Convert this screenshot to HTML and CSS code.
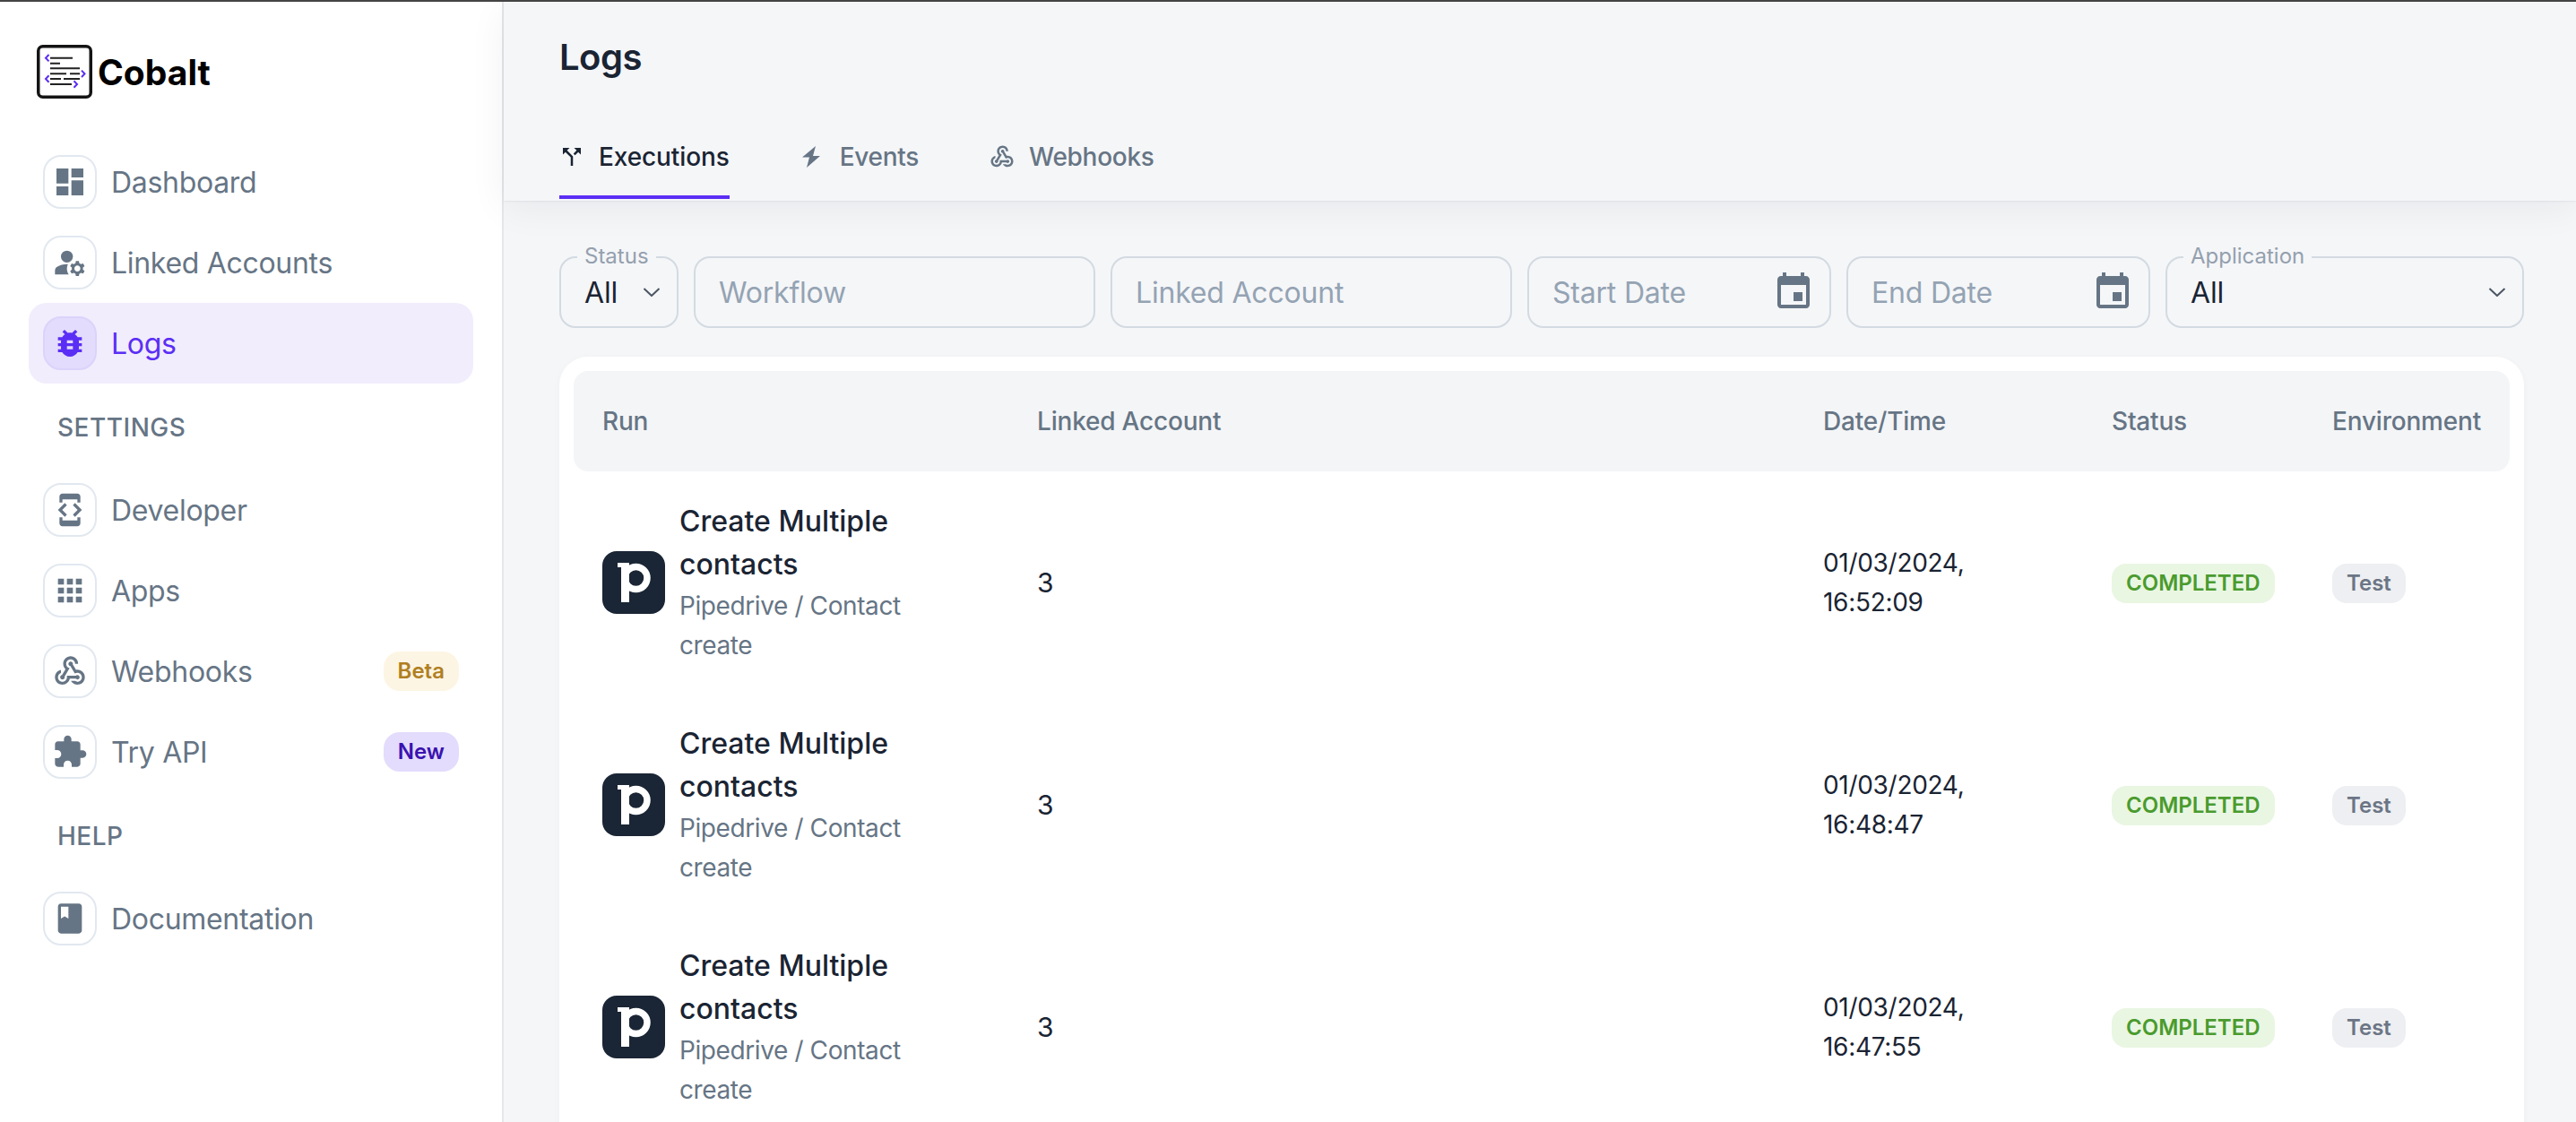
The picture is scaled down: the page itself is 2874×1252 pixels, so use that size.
FILE: index.html
```html
<!DOCTYPE html>
<html>
<head>
	<title>Cobalt - Logs</title>
	<link rel="stylesheet" href="styles.css">
</head>
<body>
	<div class="app">
		<!-- sidebar -->
		<aside class="sidebar">
			<div class="brand">
				<svg class="brand-logo" viewBox="0 0 62 60">
					<rect x="1.75" y="1.75" width="58.5" height="56.5" rx="5" fill="#fff" stroke="#141414" stroke-width="3.5"/>
					<g stroke="#222" stroke-width="2" fill="none">
						<path d="M15 14.7h25M15 20.7h11M15 26.3h33M15 32.3h18M37 32.3h11M15 38h12M30 38h18M15 44h24"/>
					</g>
					<g stroke="#5b2ef5" stroke-width="2" fill="none">
						<path d="M13.5 11l-3.5 3.7 3.5 3.7M13.5 34.3l-3.5 3.7 3.5 3.7M50 28.6l3.5 3.7-3.5 3.7M41.500 40.300l3.500 3.700-3.500 3.700"/>
					</g>
				</svg>
				<span class="brand-name">Cobalt</span>
			</div>

			<a class="nav-item">
				<span class="nav-icon"><svg viewBox="0 0 24 24"><path d="M3 13h8V3H3v10zm0 8h8v-6H3v6zm10 0h8V11h-8v10zm0-18v6h8V3h-8z"/></svg></span>
				Dashboard
			</a>
			<a class="nav-item">
				<span class="nav-icon"><svg viewBox="0 0 24 24"><circle cx="10" cy="8" r="4"/><path d="M10.670 13.020c-.22-.01-.44-.02-.67-.02-2.420 0-4.680.67-6.610 1.820-.88.52-1.390 1.500-1.390 2.530V20h9.260c-.79-1.130-1.260-2.510-1.260-4 0-1.070.25-2.070.67-2.980z"/><path d="M20.750 16c0-.22-.03-.42-.06-.63l1.140-1.010-1-1.730-1.450.49c-.32-.27-.68-.48-1.080-.63L18 11h-2l-.3 1.490c-.4.15-.76.36-1.080.63l-1.450-.49-1 1.730 1.140 1.010c-.03.21-.06.41-.06.63s.03.42.06.63l-1.140 1.010 1 1.730 1.450-.49c.32.27.68.48 1.080.63L16 21h2l.3-1.490c.4-.15.76-.36 1.080-.63l1.450.49 1-1.730-1.140-1.010c.03-.21.06-.41.06-.63zM17 18c-1.100 0-2-.9-2-2s.9-2 2-2 2 .9 2 2-.9 2-2 2z"/></svg></span>
				Linked Accounts
			</a>
			<a class="nav-item active">
				<span class="nav-icon"><svg viewBox="0 0 24 24"><path d="M20 8h-2.810c-.45-.78-1.070-1.450-1.820-1.960L17 4.410 15.590 3l-2.170 2.170C12.960 5.060 12.490 5 12 5c-.49 0-.96.06-1.410.17L8.410 3 7 4.410l1.620 1.630C7.880 6.550 7.260 7.220 6.810 8H4v2h2.090c-.05.33-.09.66-.09 1v1H4v2h2v1c0 .34.04.67.09 1H4v2h2.810c1.040 1.790 2.970 3 5.190 3s4.150-1.210 5.190-3H20v-2h-2.090c.05-.33.09-.66.09-1v-1h2v-2h-2v-1c0-.34-.04-.67-.09-1H20V8zm-6 8h-4v-2h4v2zm0-4h-4v-2h4v2z"/></svg></span>
				Logs
			</a>

			<div class="nav-section">SETTINGS</div>
			<a class="nav-item">
				<span class="nav-icon"><svg viewBox="0 0 24 24"><path d="M7 5h10v2h2V3c0-1.100-.9-1.990-2-1.990L7 1c-1.100 0-2 .9-2 2v4h2V5zm8.410 11.590L20 12l-4.590-4.590L14 8.830 17.170 12 14 15.170l1.410 1.420zM10 15.170L6.830 12 10 8.830 8.590 7.410 4 12l4.590 4.590L10 15.170zM17 19H7v-2H5v4c0 1.100.9 2 2 2h10c1.100 0 2-.9 2-2v-4h-2v2z"/></svg></span>
				Developer
			</a>
			<a class="nav-item">
				<span class="nav-icon"><svg viewBox="0 0 24 24"><path d="M4 8h4V4H4v4zm6 12h4v-4h-4v4zm-6 0h4v-4H4v4zm0-6h4v-4H4v4zm6 0h4v-4h-4v4zm6-10v4h4V4h-4zm-6 4h4V4h-4v4zm6 6h4v-4h-4v4zm0 6h4v-4h-4v4z"/></svg></span>
				Apps
			</a>
			<a class="nav-item">
				<span class="nav-icon"><svg viewBox="0 0 24 24"><path d="M10 15h5.880c.27-.31.67-.5 1.120-.5.83 0 1.500.67 1.500 1.500s-.67 1.500-1.500 1.500c-.44 0-.84-.19-1.120-.5H11.900c-.46 2.280-2.480 4-4.900 4-2.760 0-5-2.240-5-5 0-2.420 1.720-4.440 4-4.900v2.070c-1.160.41-2 1.530-2 2.830 0 1.650 1.350 3 3 3s3-1.350 3-3v-1zm2.500-11c1.650 0 3 1.350 3 3h2c0-2.760-2.240-5-5-5s-5 2.240-5 5c0 1.430.6 2.710 1.550 3.620l-2.350 3.900c-.68.14-1.200.75-1.200 1.480 0 .83.67 1.500 1.500 1.500s1.500-.67 1.500-1.500c0-.16-.02-.31-.07-.45l3.380-5.630C10.490 9.610 9.500 8.420 9.500 7c0-1.650 1.350-3 3-3zm4.500 9c-.64 0-1.230.2-1.720.54l-3.050-5.070C11.530 8.350 11 7.740 11 7c0-.83.67-1.500 1.500-1.500S14 6.170 14 7c0 .15-.02.29-.06.43l2.190 3.650c.28-.05.57-.08.87-.08 2.760 0 5 2.240 5 5s-2.240 5-5 5c-1.850 0-3.470-1.010-4.330-2.500h2.670c.48.32 1.050.5 1.660.5 1.650 0 3-1.350 3-3s-1.350-3-3-3z"/></svg></span>
				Webhooks
				<span class="nav-badge beta">Beta</span>
			</a>
			<a class="nav-item">
				<span class="nav-icon"><svg viewBox="0 0 24 24"><path d="M20.500 11H19V7c0-1.100-.9-2-2-2h-4V3.500C13 2.120 11.880 1 10.500 1S8 2.120 8 3.500V5H4c-1.100 0-1.990.9-1.990 2v3.800H3.500c1.490 0 2.700 1.210 2.700 2.700s-1.210 2.700-2.700 2.700H2V20c0 1.100.9 2 2 2h3.800v-1.500c0-1.490 1.210-2.700 2.700-2.700 1.490 0 2.700 1.210 2.700 2.700V22H17c1.100 0 2-.9 2-2v-4h1.500c1.380 0 2.500-1.120 2.500-2.500S21.880 11 20.500 11z"/></svg></span>
				Try API
				<span class="nav-badge new">New</span>
			</a>

			<div class="nav-section">HELP</div>
			<a class="nav-item">
				<span class="nav-icon"><svg viewBox="0 0 24 24"><path d="M18 2H6c-1.100 0-2 .9-2 2v16c0 1.100.9 2 2 2h12c1.100 0 2-.9 2-2V4c0-1.100-.9-2-2-2zM6 4h5v8l-2.500-1.500L6 12V4z"/></svg></span>
				Documentation
			</a>
		</aside>

		<main class="main">
			<header class="page-header">
				<h1>Logs</h1>
				<nav class="tabs">
					<a class="tab active">
						<svg viewBox="0 0 24 24"><path d="M14 4l2.290 2.290-2.880 2.880 1.420 1.420 2.880-2.880L20 10V4zm-4 0H4v6l2.290-2.290 4.710 4.700V20h2v-8.410l-5.290-5.300z"/></svg>
						Executions
					</a>
					<a class="tab">
						<svg viewBox="0 0 30 30"><path d="M18 3L3 15.500h8L8 27 23 14h-8z"/></svg>
						Events
					</a>
					<a class="tab">
						<svg viewBox="0 0 24 24"><path d="M10 15h5.880c.27-.31.67-.5 1.120-.5.83 0 1.500.67 1.500 1.500s-.67 1.500-1.500 1.500c-.44 0-.84-.19-1.120-.5H11.900c-.46 2.280-2.480 4-4.900 4-2.760 0-5-2.240-5-5 0-2.420 1.720-4.440 4-4.900v2.070c-1.160.41-2 1.530-2 2.830 0 1.650 1.350 3 3 3s3-1.350 3-3v-1zm2.500-11c1.650 0 3 1.350 3 3h2c0-2.760-2.240-5-5-5s-5 2.240-5 5c0 1.430.6 2.710 1.550 3.620l-2.350 3.900c-.68.14-1.200.75-1.200 1.480 0 .83.67 1.500 1.500 1.500s1.500-.67 1.500-1.500c0-.16-.02-.31-.07-.45l3.380-5.630C10.490 9.610 9.500 8.420 9.500 7c0-1.650 1.350-3 3-3zm4.500 9c-.64 0-1.230.2-1.720.54l-3.050-5.070C11.530 8.350 11 7.740 11 7c0-.83.67-1.500 1.500-1.500S14 6.170 14 7c0 .15-.02.29-.06.43l2.190 3.650c.28-.05.57-.08.87-.08 2.760 0 5 2.240 5 5s-2.240 5-5 5c-1.850 0-3.470-1.010-4.330-2.500h2.670c.48.32 1.050.5 1.660.5 1.650 0 3-1.350 3-3s-1.350-3-3-3z"/></svg>
						Webhooks
					</a>
				</nav>
			</header>

			<div class="content">
				<div class="filters">
					<div class="field w-status">
						<span class="field-label">Status</span>
						<span class="field-value">All</span>
						<svg class="chevron" viewBox="0 0 20 10"><path d="M1.500 1l8.500 8 8.500-8"/></svg>
					</div>
					<div class="field w-text"><span class="placeholder">Workflow</span></div>
					<div class="field w-text"><span class="placeholder">Linked Account</span></div>
					<div class="field w-date">
						<span class="placeholder">Start Date</span>
						<svg class="calendar" viewBox="0 0 24 24"><path d="M17 12h-5v5h5v-5zM16 1v2H8V1H6v2H5c-1.110 0-1.990.9-1.990 2L3 19c0 1.100.89 2 2 2h14c1.100 0 2-.9 2-2V5c0-1.100-.9-2-2-2h-1V1h-2zm3 18H5V8h14v11z"/></svg>
					</div>
					<div class="field w-date">
						<span class="placeholder">End Date</span>
						<svg class="calendar" viewBox="0 0 24 24"><path d="M17 12h-5v5h5v-5zM16 1v2H8V1H6v2H5c-1.110 0-1.990.9-1.990 2L3 19c0 1.100.89 2 2 2h14c1.100 0 2-.9 2-2V5c0-1.100-.9-2-2-2h-1V1h-2zm3 18H5V8h14v11z"/></svg>
					</div>
					<div class="field w-app">
						<span class="field-label">Application</span>
						<span class="field-value">All</span>
						<svg class="chevron" viewBox="0 0 20 10"><path d="M1.500 1l8.500 8 8.500-8"/></svg>
					</div>
				</div>

				<section class="card">
					<div class="row head">
						<div>Run</div>
						<div>Linked Account</div>
						<div>Date/Time</div>
						<div>Status</div>
						<div>Environment</div>
					</div>

					<div class="row">
						<div class="run">
							<svg class="app-logo" viewBox="0 0 70 70"><rect width="70" height="70" rx="16" fill="#1a2535"/><circle cx="37.500" cy="30" r="12.500" fill="none" stroke="#fff" stroke-width="7.500"/><path d="M17 13h13v44H21V18h-4z" fill="#fff"/></svg>
							<div>
								<div class="run-name">Create Multiple contacts</div>
								<div class="run-meta">Pipedrive / Contact create</div>
							</div>
						</div>
						<div class="num">3</div>
						<div class="date">01/03/2024, 16:52:09</div>
						<div><span class="chip done">COMPLETED</span></div>
						<div><span class="chip env">Test</span></div>
					</div>

					<div class="row">
						<div class="run">
							<svg class="app-logo" viewBox="0 0 70 70"><rect width="70" height="70" rx="16" fill="#1a2535"/><circle cx="37.500" cy="30" r="12.500" fill="none" stroke="#fff" stroke-width="7.500"/><path d="M17 13h13v44H21V18h-4z" fill="#fff"/></svg>
							<div>
								<div class="run-name">Create Multiple contacts</div>
								<div class="run-meta">Pipedrive / Contact create</div>
							</div>
						</div>
						<div class="num">3</div>
						<div class="date">01/03/2024, 16:48:47</div>
						<div><span class="chip done">COMPLETED</span></div>
						<div><span class="chip env">Test</span></div>
					</div>

					<div class="row">
						<div class="run">
							<svg class="app-logo" viewBox="0 0 70 70"><rect width="70" height="70" rx="16" fill="#1a2535"/><circle cx="37.500" cy="30" r="12.500" fill="none" stroke="#fff" stroke-width="7.500"/><path d="M17 13h13v44H21V18h-4z" fill="#fff"/></svg>
							<div>
								<div class="run-name">Create Multiple contacts</div>
								<div class="run-meta">Pipedrive / Contact create</div>
							</div>
						</div>
						<div class="num">3</div>
						<div class="date">01/03/2024, 16:47:55</div>
						<div><span class="chip done">COMPLETED</span></div>
						<div><span class="chip env">Test</span></div>
					</div>
				</section>
			</div>
		</main>
	</div>
</body>
</html>
```
FILE: styles.css
```css
* {
	box-sizing: border-box;
}

html, body {
	height: 100%;
	margin: 0;
	overflow: hidden;
}

body {
	font-family: Inter, "Noto Sans", sans-serif;
	color: #1a2433;
	background-color: #f5f6f8;
	border-top: 2px solid #444;
}

.app {
	display: flex;
	height: 100%;
}

/* sidebar */
.sidebar {
	flex: 0 0 562px;
	padding: 48px 32px 0;
	background-color: #fff;
	border-right: 2px solid #e5e7eb;
}

.brand {
	display: flex;
	align-items: center;
	gap: 6px;
	height: 60px;
	margin: 0 0 48px 9px;
}

.brand-logo {
	width: 62px;
	height: 60px;
}

.brand-name {
	font-size: 39px;
	font-weight: 700;
	color: #000;
}

.nav-item {
	display: flex;
	align-items: center;
	height: 90px;
	padding: 0 16px;
	font-size: 32px;
	letter-spacing: -0.3px;
	color: #667585;
	border-radius: 20px;
}

.nav-icon {
	display: flex;
	align-items: center;
	justify-content: center;
	flex: 0 0 60px;
	height: 60px;
	margin-right: 16px;
	background-color: #fff;
	border: 2px solid #e2e8f0;
	border-radius: 20px;
}

.nav-icon svg {
	width: 40px;
	height: 40px;
	fill: #667585;
}

.nav-item.active {
	color: #5b2ef5;
	background-color: #f1edfc;
}

.nav-item.active .nav-icon {
	background-color: #e3dcfc;
	border-color: #dcd3fb;
}

.nav-item.active svg {
	fill: #5b2ef5;
}

.nav-section {
	height: 96px;
	padding: 35px 0 0 32px;
	font-size: 28px;
	font-weight: 500;
	line-height: 28px;
	letter-spacing: 0.5px;
	color: #667585;
}

.nav-badge {
	margin-left: auto;
	height: 44px;
	padding: 0 16px;
	font-size: 24px;
	font-weight: 600;
	line-height: 44px;
	letter-spacing: 0;
	border-radius: 18px;
}

.nav-badge.beta {
	color: #b07f22;
	background-color: #fdf5e3;
}

.nav-badge.new {
	color: #3a12b0;
	background-color: #e3dcfc;
}

/* main */
.main {
	flex: 1;
	min-width: 0;
}

.page-header {
	height: 222px;
	padding: 38px 0 0 62px;
	box-shadow: 0 1px 2px rgba(16, 24, 40, 0.06), 0 8px 40px rgba(16, 24, 40, 0.06);
}

h1 {
	margin: 0;
	font-size: 40px;
	font-weight: 600;
	line-height: 48px;
	letter-spacing: -0.5px;
	color: #1a2433;
}

.tabs {
	display: flex;
	gap: 79px;
	margin-top: 38px;
}

.tab {
	display: flex;
	align-items: center;
	gap: 15px;
	height: 96px;
	padding-top: 6px;
	font-size: 28px;
	font-weight: 500;
	letter-spacing: -0.3px;
	color: #667585;
	border-bottom: 4px solid transparent;
}

.tab svg {
	width: 30px;
	height: 30px;
	margin-left: -1px;
	fill: #667585;
}

.tab.active {
	color: #1a2433;
	letter-spacing: -0.1px;
	border-bottom-color: #5b2ef5;
}

.tab.active svg {
	fill: #1a2433;
}

.content {
	padding: 62px 58px 0 62px;
}

.filters {
	display: flex;
	gap: 17px;
}

.field {
	position: relative;
	display: flex;
	align-items: center;
	justify-content: space-between;
	height: 80px;
	padding: 0 26px;
	font-size: 32px;
	letter-spacing: -0.2px;
	border: 2px solid #d3dae2;
	border-radius: 18px;
}

.w-status { width: 133px; padding-right: 18px; }
.w-text { width: 448px; }
.w-date { width: 339px; padding-right: 16px; }
.w-app { width: 400px; padding-right: 18px; }

.field-label {
	position: absolute;
	top: -14px;
	left: 18px;
	padding: 0 8px;
	font-size: 24px;
	line-height: 24px;
	letter-spacing: 0;
	color: #94a0ae;
	background-color: #f5f6f8;
}

.field-value {
	color: #1a2433;
}

.placeholder {
	color: #94a3b3;
}

.chevron {
	width: 20px;
	height: 10px;
	fill: none;
	stroke: #4b5563;
	stroke-width: 2;
}

.calendar {
	width: 48px;
	height: 48px;
	fill: #667585;
}

.card {
	margin-top: 32px;
	padding: 16px;
	background-color: #fff;
	border-radius: 32px;
	box-shadow: 0 2px 8px rgba(16, 24, 40, 0.03);
}

.row {
	display: grid;
	grid-template-columns: 485px 877px 322px 246px 1fr;
	align-items: center;
	height: 248px;
	padding-left: 32px;
	font-size: 30px;
}

.row.head {
	height: 112px;
	font-size: 28px;
	font-weight: 500;
	letter-spacing: -0.2px;
	color: #667585;
	background-color: #f4f5f7;
	border-radius: 16px;
}

.run {
	display: flex;
	align-items: center;
	gap: 16px;
	width: 400px;
}

.app-logo {
	flex: 0 0 70px;
	width: 70px;
	height: 70px;
}

.run-name {
	font-size: 32px;
	font-weight: 500;
	line-height: 48px;
}

.run-meta {
	font-size: 28px;
	line-height: 44px;
	letter-spacing: -0.4px;
	color: #667585;
}

.date {
	width: 190px;
	font-size: 28px;
	line-height: 44px;
	letter-spacing: -0.3px;
}

.chip {
	display: inline-block;
	height: 44px;
	margin-top: 2px;
	padding: 0 16px;
	font-size: 24px;
	font-weight: 600;
	line-height: 44px;
	border-radius: 16px;
}

.chip.done {
	color: #4a9b2e;
	background-color: #e9f6e2;
}

.chip.env {
	color: #6b7585;
	background-color: #eeeff2;
}
```
